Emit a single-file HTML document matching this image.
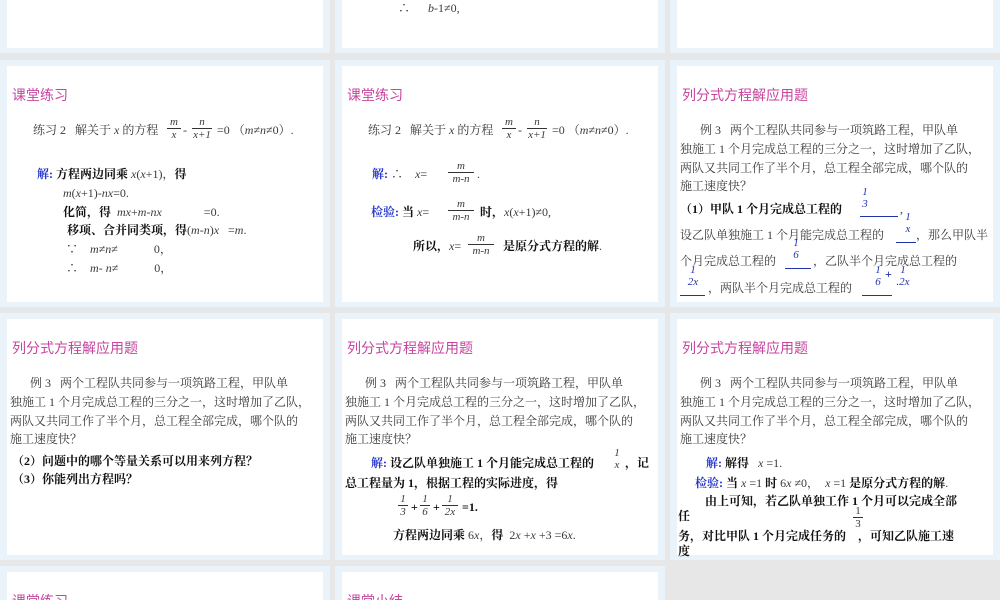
<!DOCTYPE html>
<html><head><meta charset="utf-8"><style>
*{margin:0;padding:0;box-sizing:border-box}
html{width:1000px;height:600px;overflow:hidden}
body{width:1000px;height:600px;overflow:hidden;background:#e7e7e7;position:relative;font-family:"Liberation Serif","Noto Serif CJK SC",serif;color:#3a3a3a}
.c{position:absolute;width:330px;height:247px;background:#eaf2fa;overflow:hidden}
.w{position:absolute;left:7px;top:6px;right:7px;bottom:5px;background:#fff}
.t{position:absolute;white-space:nowrap;font-size:12px;line-height:14px}
.h{position:absolute;white-space:nowrap;font-family:"Noto Sans CJK SC",sans-serif;font-size:14px;line-height:16px;color:#c7449f}
.b{font-weight:bold;color:#111}
.bl{color:#2233cc;font-weight:bold}
i{font-style:italic}
.f{position:absolute;font-size:11px;line-height:12px;text-align:center;font-style:italic}
.f span{display:block}
.f span+span{border-top:1px solid #333}
.u{color:#2233aa}
.u span+span{border-top:1px solid #2233aa}
</style></head><body>

<!-- row0 -->
<div class="c" style="left:0;top:-194px"><div class="w"></div></div>
<div class="c" style="left:335px;top:-194px"><div class="w"></div>
<div class="t" style="left:63px;top:195px">∴ &nbsp;&nbsp;&nbsp;&nbsp;&nbsp;<i>b</i>-1≠0,</div></div>
<div class="c" style="left:670px;top:-194px"><div class="w"></div></div>

<!-- row1 col0 -->
<div class="c" style="left:0;top:60px"><div class="w"></div>
<div class="h" style="left:12px;top:27px">课堂练习</div>
<div class="t" style="left:33px;top:63px">练习 2 &nbsp;&nbsp;解关于 <i>x</i> 的方程</div>
<div class="f" style="left:167px;top:56px;width:14px"><span>m</span><span>x</span></div>
<div class="t" style="left:183px;top:63px">-</div>
<div class="f" style="left:192px;top:56px;width:20px"><span>n</span><span>x+1</span></div>
<div class="t" style="left:217px;top:63px">=0 （<i>m</i>≠<i>n</i>≠0）.</div>
<div class="t" style="left:37px;top:107px"><span class="bl">解:</span> <span class="b">方程两边同乘</span> <i>x</i>(<i>x</i>+1)，<span class="b">得</span></div>
<div class="t" style="left:63px;top:126px"><i>m</i>(<i>x</i>+1)-<i>nx</i>=0.</div>
<div class="t" style="left:63px;top:145px"><span class="b">化简，得</span> &nbsp;<i>mx</i>+<i>m</i>-<i>nx</i> &nbsp;&nbsp;&nbsp;&nbsp;&nbsp;&nbsp;&nbsp;&nbsp;&nbsp;&nbsp;&nbsp;&nbsp;&nbsp;=0.</div>
<div class="t" style="left:67px;top:163px"><span class="b">移项、合并同类项，得</span>(<i>m</i>-<i>n</i>)<i>x</i> &nbsp;&nbsp;=<i>m</i>.</div>
<div class="t" style="left:66px;top:182px">∵ &nbsp;&nbsp;&nbsp;<i>m</i>≠<i>n</i>≠ &nbsp;&nbsp;&nbsp;&nbsp;&nbsp;&nbsp;&nbsp;&nbsp;&nbsp;&nbsp;&nbsp;0，</div>
<div class="t" style="left:66px;top:201px">∴ &nbsp;&nbsp;&nbsp;<i>m</i>- <i>n</i>≠ &nbsp;&nbsp;&nbsp;&nbsp;&nbsp;&nbsp;&nbsp;&nbsp;&nbsp;&nbsp;&nbsp;0，</div>
</div>

<!-- row1 col1 -->
<div class="c" style="left:335px;top:60px"><div class="w"></div>
<div class="h" style="left:12px;top:27px">课堂练习</div>
<div class="t" style="left:33px;top:63px">练习 2 &nbsp;&nbsp;解关于 <i>x</i> 的方程</div>
<div class="f" style="left:167px;top:56px;width:14px"><span>m</span><span>x</span></div>
<div class="t" style="left:183px;top:63px">-</div>
<div class="f" style="left:192px;top:56px;width:20px"><span>n</span><span>x+1</span></div>
<div class="t" style="left:217px;top:63px">=0 （<i>m</i>≠<i>n</i>≠0）.</div>
<div class="t" style="left:37px;top:107px"><span class="bl">解:</span> ∴ &nbsp;&nbsp;&nbsp;<i>x</i>=</div>
<div class="f" style="left:113px;top:100px;width:26px"><span>m</span><span>m-n</span></div>
<div class="t" style="left:142px;top:107px">.</div>
<div class="t" style="left:36px;top:145px"><span class="bl">检验:</span> <span class="b">当</span> <i>x</i>=</div>
<div class="f" style="left:113px;top:138px;width:26px"><span>m</span><span>m-n</span></div>
<div class="t" style="left:145px;top:145px"><span class="b">时，</span><i>x</i>(<i>x</i>+1)≠0,</div>
<div class="t" style="left:78px;top:179px"><span class="b">所以，</span><i>x</i>=</div>
<div class="f" style="left:133px;top:172px;width:26px"><span>m</span><span>m-n</span></div>
<div class="t" style="left:168px;top:179px" ><span class="b">是原分式方程的解</span>.</div>
</div>

<!-- row1 col2 -->
<div class="c" style="left:670px;top:60px"><div class="w"></div>
<div class="h" style="left:12px;top:27px">列分式方程解应用题</div>
<div class="t" style="left:30px;top:63px">例 3 &nbsp;&nbsp;两个工程队共同参与一项筑路工程，甲队单</div>
<div class="t" style="left:10px;top:82px">独施工 1 个月完成总工程的三分之一，这时增加了乙队，</div>
<div class="t" style="left:10px;top:101px">两队又共同工作了半个月，总工程全部完成，哪个队的</div>
<div class="t" style="left:10px;top:119px">施工速度快？</div>
<div class="t b" style="left:10px;top:142px">（1）甲队 1 个月完成总工程的</div>
<div class="f u" style="left:190px;top:126px;width:10px"><span>1</span><span style="border:none">3</span></div>
<div class="t u" style="left:190px;top:142px;width:38px;height:15px;border-bottom:1px solid #2233aa"></div>
<div class="t" style="left:230px;top:142px">,</div>
<div class="t" style="left:10px;top:168px">设乙队单独施工 1 个月能完成总工程的</div>
<div class="f u" style="left:232px;top:151px;width:12px"><span>1</span><span style="border:none">x</span></div>
<div class="t" style="left:226px;top:168px;width:20px;height:15px;border-bottom:1px solid #2233aa"></div>
<div class="t" style="left:246px;top:168px">，那么甲队半</div>
<div class="t" style="left:10px;top:194px">个月完成总工程的</div>
<div class="f u" style="left:121px;top:177px;width:10px"><span>1</span><span style="border:none">6</span></div>
<div class="t" style="left:115px;top:194px;width:26px;height:15px;border-bottom:1px solid #2233aa"></div>
<div class="t" style="left:143px;top:194px">，乙队半个月完成总工程的</div>
<div class="f u" style="left:16px;top:204px;width:14px"><span>1</span><span style="border:none">2x</span></div>
<div class="t" style="left:10px;top:221px;width:25px;height:15px;border-bottom:1px solid #2233aa"></div>
<div class="t" style="left:38px;top:221px">，两队半个月完成总工程的</div>
<div class="f u" style="left:203px;top:204px;width:10px"><span>1</span><span style="border:none">6</span></div>
<div class="t u" style="left:215px;top:207px;font-weight:bold">+</div>
<div class="f u" style="left:226px;top:204px;width:14px"><span>1</span><span style="border:none">.2x</span></div>
<div class="t" style="left:192px;top:221px;width:30px;height:15px;border-bottom:1px solid #2233aa"></div>
</div>

<!-- row2 col0 -->
<div class="c" style="left:0;top:313px"><div class="w"></div>
<div class="h" style="left:12px;top:27px">列分式方程解应用题</div>
<div class="t" style="left:30px;top:63px">例 3 &nbsp;&nbsp;两个工程队共同参与一项筑路工程，甲队单</div>
<div class="t" style="left:10px;top:82px">独施工 1 个月完成总工程的三分之一，这时增加了乙队，</div>
<div class="t" style="left:10px;top:101px">两队又共同工作了半个月，总工程全部完成，哪个队的</div>
<div class="t" style="left:10px;top:119px">施工速度快？</div>
<div class="t b" style="left:12px;top:141px">（2）问题中的哪个等量关系可以用来列方程？</div>
<div class="t b" style="left:12px;top:159px">（3）你能列出方程吗？</div>
</div>

<!-- row2 col1 -->
<div class="c" style="left:335px;top:313px"><div class="w"></div>
<div class="h" style="left:12px;top:27px">列分式方程解应用题</div>
<div class="t" style="left:30px;top:63px">例 3 &nbsp;&nbsp;两个工程队共同参与一项筑路工程，甲队单</div>
<div class="t" style="left:10px;top:82px">独施工 1 个月完成总工程的三分之一，这时增加了乙队，</div>
<div class="t" style="left:10px;top:101px">两队又共同工作了半个月，总工程全部完成，哪个队的</div>
<div class="t" style="left:10px;top:119px">施工速度快？</div>
<div class="t" style="left:36px;top:143px"><span class="bl">解:</span> <span class="b">设乙队单独施工 1 个月能完成总工程的</span></div>
<div class="f" style="left:277px;top:134px;width:10px"><span>1</span><span style="border:none">x</span></div>
<div class="t b" style="left:290px;top:143px">，记</div>
<div class="t b" style="left:10px;top:163px">总工程量为 1，根据工程的实际进度，得</div>
<div class="f" style="left:63px;top:180px;width:10px"><span>1</span><span>3</span></div>
<div class="t b" style="left:76px;top:187px">+</div>
<div class="f" style="left:85px;top:180px;width:10px"><span>1</span><span>6</span></div>
<div class="t b" style="left:98px;top:187px">+</div>
<div class="f" style="left:107px;top:180px;width:16px"><span>1</span><span>2x</span></div>
<div class="t b" style="left:127px;top:187px">=1.</div>
<div class="t" style="left:58px;top:215px"><span class="b">方程两边同乘</span> 6<i>x</i>，<span class="b">得</span> &nbsp;2<i>x</i> +<i>x</i> +3 =6<i>x</i>.</div>
</div>

<!-- row2 col2 -->
<div class="c" style="left:670px;top:313px"><div class="w"></div>
<div class="h" style="left:12px;top:27px">列分式方程解应用题</div>
<div class="t" style="left:30px;top:63px">例 3 &nbsp;&nbsp;两个工程队共同参与一项筑路工程，甲队单</div>
<div class="t" style="left:10px;top:82px">独施工 1 个月完成总工程的三分之一，这时增加了乙队，</div>
<div class="t" style="left:10px;top:101px">两队又共同工作了半个月，总工程全部完成，哪个队的</div>
<div class="t" style="left:10px;top:119px">施工速度快？</div>
<div class="t" style="left:36px;top:143px"><span class="bl">解:</span> <span class="b">解得</span> &nbsp;&nbsp;<i>x</i> =1.</div>
<div class="t" style="left:25px;top:163px"><span class="bl">检验:</span> <span class="b">当</span> <i>x</i> =1 <span class="b">时</span> 6<i>x</i> ≠0， &nbsp;<i>x</i> =1 <span class="b">是原分式方程的解</span>.</div>
<div class="t b" style="left:35px;top:181px">由上可知，若乙队单独工作 1 个月可以完成全部</div>
<div class="t b" style="left:8px;top:196px">任</div>
<div class="f" style="left:183px;top:192px;width:10px;font-style:normal"><span>1</span><span>3</span></div>
<div class="t b" style="left:8px;top:216px">务，对比甲队 1 个月完成任务的 &nbsp;&nbsp;&nbsp;，可知乙队施工速</div>
<div class="t b" style="left:8px;top:231px">度</div>
</div>

<!-- row3 -->
<div class="c" style="left:0;top:566px;height:34px"><div class="w" style="bottom:0"></div>
<div class="h" style="left:12px;top:27px">课堂练习</div></div>
<div class="c" style="left:335px;top:566px;height:34px"><div class="w" style="bottom:0"></div>
<div class="h" style="left:12px;top:27px">课堂小结</div></div>
</body></html>
